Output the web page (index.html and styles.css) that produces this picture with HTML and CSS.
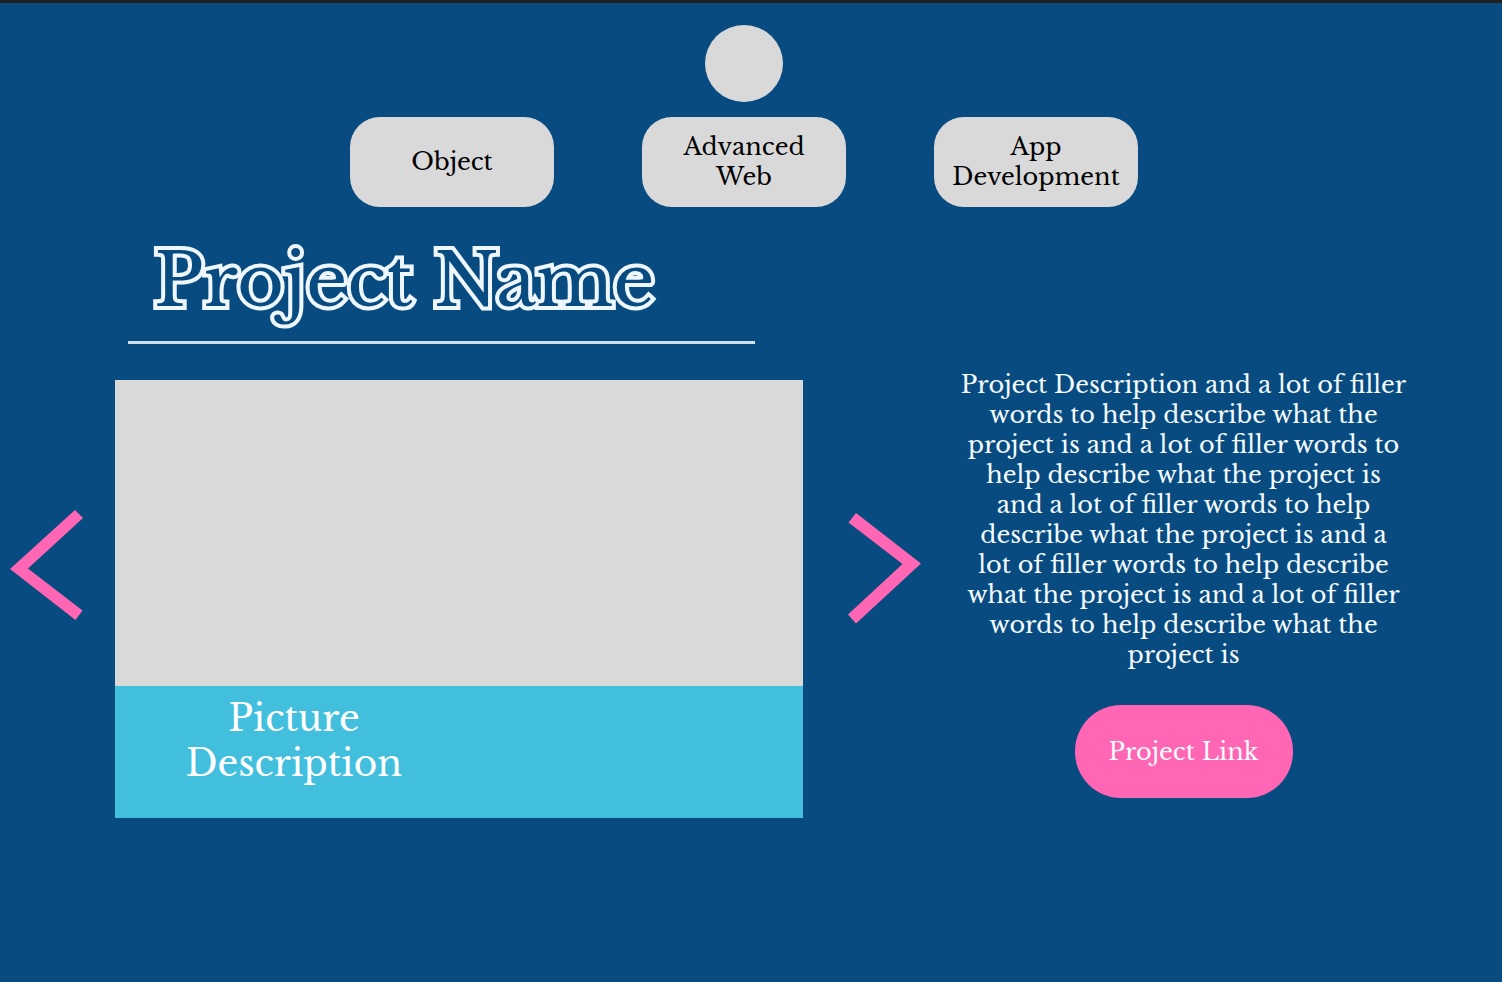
FILE: index.html
```html
<!DOCTYPE html>
<html lang="en">
<head>
<meta charset="utf-8">
<meta name="viewport" content="width=device-width, initial-scale=1">
<title>Project Name</title>
<link rel="stylesheet" href="styles.css">
</head>
<body>
<header class="site-header">
  <a class="logo" href="#" aria-label="Home"></a>
  <nav class="nav">
    <a class="nav-link" href="#">Object</a>
    <a class="nav-link" href="#">Advanced<br>Web</a>
    <a class="nav-link" href="#">App<br>Development</a>
  </nav>
</header>
<main>
  <div class="heading">
    <h1 class="title">Project Name</h1>
  </div>
  <div class="project">
    <button class="arrow" type="button" aria-label="Previous picture">
      <svg width="73" height="120" viewBox="10 507 73 120"><path d="M10 569 75 510 83 518 28 568.500 82.500 610.500 75.500 620Z"/></svg>
    </button>
    <figure class="slide">
      <div class="picture"></div>
      <figcaption class="caption">Picture<br>Description</figcaption>
    </figure>
    <button class="arrow arrow-next" type="button" aria-label="Next picture">
      <svg width="73" height="120" viewBox="848 507 73 120"><path d="M921 563.500 856 513 848.500 522.500 902.500 564 848 614.500 856 623.500Z"/></svg>
    </button>
    <section class="details">
      <p class="description">Project Description and a lot of filler<br>words to help describe what the<br>project is and a lot of filler words to<br>help describe what the project is<br>and a lot of filler words to help<br>describe what the project is and a<br>lot of filler words to help describe<br>what the project is and a lot of filler<br>words to help describe what the<br>project is</p>
      <a class="project-link" href="#">Project Link</a>
    </section>
  </div>
</main>
</body>
</html>
```
FILE: styles.css
```css
* {
  box-sizing: border-box;
}

body {
  margin: 0;
  min-height: 100vh;
  border-top: 3px solid #1f1f1f;
  background: #084b81;
  color: #f4fbff;
  font-family: "Libre Baskerville", "Liberation Serif", serif;
  font-size: 24px;
  line-height: 30px;
}

a {
  color: inherit;
  text-decoration: none;
}

.site-header {
  display: flex;
  flex-direction: column;
  align-items: center;
  gap: 15px;
  padding: 22px 14px 0 0;
}

.logo {
  width: 78px;
  height: 77px;
  border-radius: 50%;
  background: #d9d9d9;
}

.nav {
  display: flex;
  gap: 88px;
}

.nav-link {
  display: flex;
  align-items: center;
  justify-content: center;
  width: 204px;
  min-height: 90px;
  border-radius: 30px;
  background: #d9d9d9;
  color: #000;
  text-align: center;
}

.heading {
  display: grid;
  grid-template-columns: 128fr 627fr 747fr;
  padding: 24px 0 36px;
}

.title {
  grid-column: 2;
  margin: 0;
  padding: 0 0 10px 26px;
  border-bottom: 3px solid #d0dfec;
  color: #084b81;
  font-size: 72px;
  font-weight: 400;
  line-height: 100px;
  white-space: nowrap;
  paint-order: stroke fill;
  -webkit-text-stroke: 8px #eef7fd;
}

.project {
  display: grid;
  grid-template-columns: 115fr 688fr 128fr 505fr 66fr;
}

.arrow {
  display: flex;
  align-items: center;
  justify-content: flex-start;
  margin: 0;
  padding: 0 0 64px 10px;
  border: 0;
  background: none;
  cursor: pointer;
}

.arrow-next {
  justify-content: flex-end;
  padding: 0 10px 64px 0;
}

.arrow svg {
  flex: none;
  fill: #ff66b3;
}

.slide {
  margin: 0;
}

.picture {
  height: 306px;
  background: #d9d9d9;
}

.caption {
  padding: 10px 48% 32px 0;
  background: #43bfde;
  color: #fff;
  font-size: 36px;
  line-height: 45px;
  text-align: center;
}

.details {
  display: flex;
  flex-direction: column;
  align-items: center;
  margin-top: -10px;
}

.description {
  margin: 0 0 35px;
  text-align: center;
  white-space: nowrap;
}

.project-link {
  display: flex;
  align-items: center;
  justify-content: center;
  width: 218px;
  height: 93px;
  border-radius: 46px;
  background: #ff66b3;
}
```
